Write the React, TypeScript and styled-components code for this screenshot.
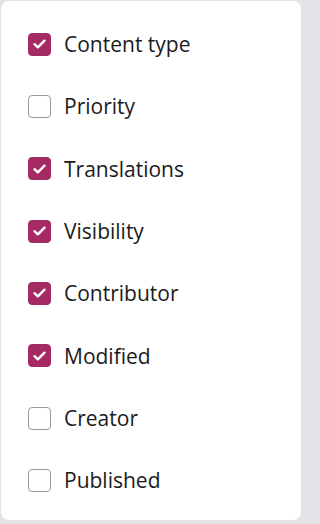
import React, { useState } from 'react';
import styled, { createGlobalStyle } from 'styled-components';

const GlobalStyle = createGlobalStyle`
  html, body {
    margin: 0;
    padding: 0;
    background: #e3e3e7;
  }
  body {
    font-family: "Open Sans", "Noto Sans", sans-serif;
  }
`;

const Panel = styled.div`
  box-sizing: border-box;
  margin: 1px;
  width: 300px;
  height: 519px;
  background: #fff;
  border-radius: 8px;
  padding: 12px 0 0 26px;
  display: flex;
  flex-direction: column;
`;

const Row = styled.label`
  display: flex;
  align-items: center;
  gap: 13px;
  height: 62.33px;
  flex-shrink: 0;
  cursor: pointer;
  font-size: 21px;
  color: #1b1b1b;
`;

const Box = styled.span<{ $checked: boolean }>`
  box-sizing: border-box;
  width: 23px;
  height: 23px;
  border-radius: 4px;
  display: flex;
  align-items: center;
  justify-content: center;
  background: ${({ $checked }) => ($checked ? '#a32a62' : '#fff')};
  border: 1px solid ${({ $checked }) => ($checked ? '#a32a62' : '#9a9a9a')};
  margin-left: 1px;

  svg {
    display: ${({ $checked }) => ($checked ? 'block' : 'none')};
  }
`;

const columns = [
  { name: 'Content type', checked: true },
  { name: 'Priority', checked: false },
  { name: 'Translations', checked: true },
  { name: 'Visibility', checked: true },
  { name: 'Contributor', checked: true },
  { name: 'Modified', checked: true },
  { name: 'Creator', checked: false },
  { name: 'Published', checked: false },
];

const App = () => {
  const [items, setItems] = useState(columns);

  const toggle = (index: number) => {
    setItems(items.map((c, i) => (i === index ? { ...c, checked: !c.checked } : c)));
  };

  return (
    <>
      <GlobalStyle />
      <Panel>
        {items.map((c, index) => (
          <Row key={c.name} onClick={() => toggle(index)}>
            <Box $checked={c.checked}>
              <svg width="13" height="10" viewBox="0 0 13 10">
                <path d="M1.5 5.2 L4.8 8.3 L11.5 1.7" fill="none" stroke="#fff" strokeWidth="2.4" strokeLinecap="round" strokeLinejoin="round" />
              </svg>
            </Box>
            {c.name}
          </Row>
        ))}
      </Panel>
    </>
  );
};

export default App;
